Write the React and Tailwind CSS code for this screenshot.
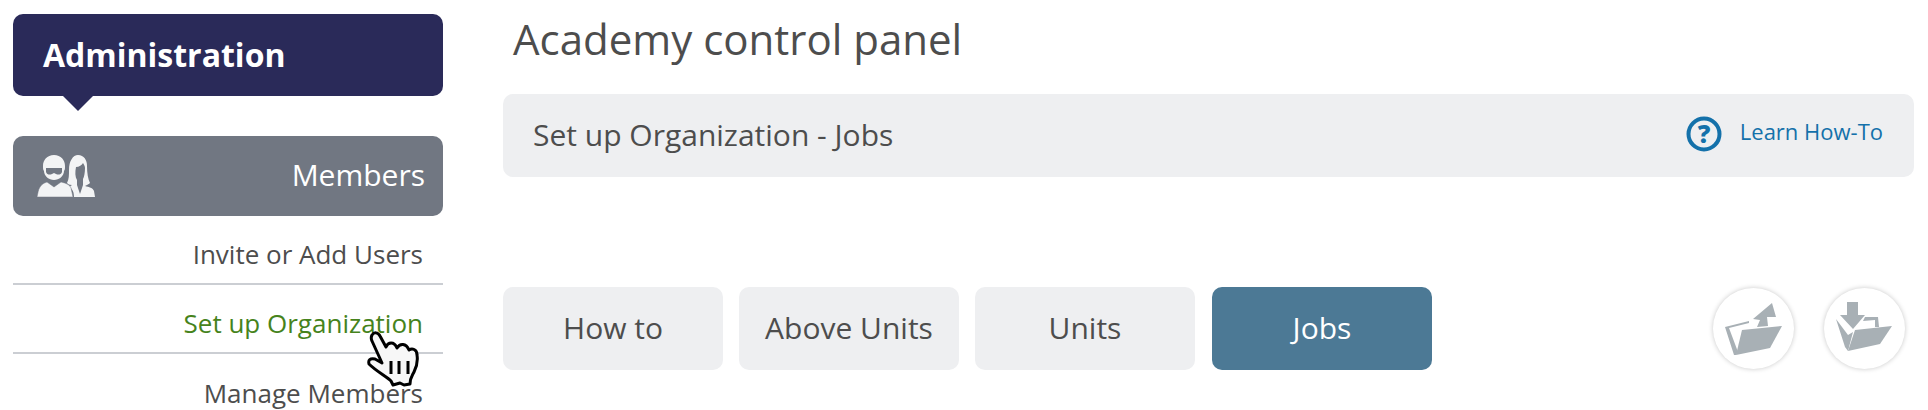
import React from "react";

function MembersIcon() {
  return (
    <svg width="62" height="46" viewBox="0 0 62 46" fill="#fff" opacity="0.92">
      <path d="M42 2c6 0 9 5 9 11 0 7 1 13 3 17-1 1-3 2-5 3 4 1 8 2 9 5l1 6H38c0-4-1-8-5-10 1-1 2-1 3-2-3 0-4-1-5-2 2-4 2-8 2-13 0-9 4-15 9-15z" />
      <path d="M40 14c3 0 6-2 7-4 1 2 2 3 2 5 0 5-1 9-2 11v6l-3 9-3-9v-5c-2-3-2-8-1-13z" fill="#717782" />
      <path d="M11 29l7 5 7-5c5 1 9 3 10 6l2 9H1c1-4 1-7 3-10 2-3 4-4 7-5z" stroke="#717782" strokeWidth="0.5" />
      <path d="M18 2c7 0 11 5 11 11 0 2 0 4-1 5 0 5-5 9-10 9S8 23 8 18c-1-1-1-3-1-5C7 7 11 2 18 2z" />
      <path d="M10 15h16l0 4c-1 3-4 3-6 2l-2-1-2 1c-2 1-5 1-6-2z" fill="#717782" />
    </svg>
  );
}

function HandCursor() {
  return (
    <svg className="absolute left-[367px] top-[331px]" width="52" height="56" viewBox="0 0 52 56">
      <path
        d="M5 4C7 1 11 1 13 5L19 16C21 11 27 10 30 17C33 12 39 12 42 19C45 17 50 18 50 24C51 30 49 37 47 41C45 45 43 47 43 53L37 54L33 52L26 54L24 50C20 46 9 40 2 33C1 29 3 27 8 28L15 32L5 10C4 8 4 6 5 4Z"
        fill="#f7f7f7"
        stroke="#000"
        strokeWidth="3"
        strokeLinejoin="round"
      />
      <path d="M24 30v13M32 30v13M41 30v13" stroke="#000" strokeWidth="3" fill="none" />
    </svg>
  );
}

function UploadFolder() {
  return (
    <svg className="blur-[0.5px]" width="58" height="54" viewBox="0 0 58 54" fill="#a8b0b5">
      <path d="M47 1L28 17l7 1-3 7 11-1-1-9 9 0z" />
      <path d="M0 25l24-6v2L4 26l9 24-2 3-2 0z" />
      <path d="M17 28l40-4-12 22-34 7z" />
    </svg>
  );
}

function DownloadFolder() {
  return (
    <svg className="blur-[0.5px]" width="58" height="54" viewBox="0 0 58 54" fill="#a8b0b5">
      <path d="M11 0h11v13h7L17 27 4 13h7z" />
      <path d="M0 17l12 16 5-3-5 19-3-4z" />
      <path d="M29 15h13l1 10h-4l0-7-12 1z" />
      <path d="M19 28l37-4-12 18-32 7z" />
    </svg>
  );
}

function Tab({ children, active, className }) {
  return (
    <button
      className={
        (active
          ? "flex h-[83px] w-[220px] items-center justify-center rounded-[10px] bg-[#4c7995] pb-[2px] text-[30px] text-white "
          : "flex h-[83px] w-[220px] items-center justify-center rounded-[10px] bg-[#eeeff1] pb-[2px] text-[30px] text-[#4d4d4d] ") +
        (className || "")
      }
    >
      {children}
    </button>
  );
}

export default function App() {
  return (
    <div className="relative flex h-[410px] w-[1928px] overflow-hidden bg-white font-['Open_Sans',sans-serif]">
      <aside className="ml-[13px] mt-[14px] flex w-[430px] shrink-0 flex-col">
        <div className="relative flex h-[82px] shrink-0 items-center rounded-[10px] bg-[#2a2a59] pl-[30px] text-[32px] font-bold text-white">
          Administration
          <span className="absolute left-[50px] top-[82px] h-0 w-0 border-x-[15px] border-t-[15px] border-x-transparent border-t-[#2a2a59]" />
        </div>
        <div className="mt-[40px] flex h-[80px] shrink-0 items-center justify-between rounded-[10px] bg-[#717782] pl-[23px] pr-[18px] text-[30px] text-white">
          <MembersIcon />
          <span className="pb-[4px]">Members</span>
        </div>
        <div className="flex h-[69px] shrink-0 items-center justify-end border-b-2 border-[#cbced3] pr-[20px] pt-[9px] text-[26px] text-[#4d4d4d]">
          Invite or Add Users
        </div>
        <div className="flex h-[69px] shrink-0 items-center justify-end border-b-2 border-[#cbced3] pr-[20px] pt-[9px] text-[26px] text-[#46831c]">
          Set up Organization
        </div>
        <div className="flex h-[69px] shrink-0 items-center justify-end pr-[20px] pt-[9px] text-[26px] text-[#4d4d4d]">
          Manage Members
        </div>
      </aside>

      <main className="ml-[60px] flex w-[1411px] shrink-0 flex-col">
        <h1 className="ml-[10px] mt-[10px] h-[70px] text-[42px] leading-[58px] text-[#4d4d4d]">Academy control panel</h1>
        <div className="mt-[14px] flex h-[83px] shrink-0 items-center justify-between rounded-[10px] bg-[#eeeff1] pl-[30px] pr-[31px]">
          <span className="pb-[2px] text-[30px] text-[#4d4d4d]">Set up Organization - Jobs</span>
          <a className="flex items-center gap-[18px] pb-[3px] text-[22px] text-[#1471aa]">
            <svg width="36" height="36" viewBox="0 0 36 36">
              <circle cx="18" cy="18" r="15.5" fill="none" stroke="#1471aa" strokeWidth="4" />
              <text x="18" y="27" textAnchor="middle" fontSize="25" fontWeight="800" fontFamily="Open Sans" fill="#1471aa">?</text>
            </svg>
            <span className="pb-[5px]">Learn How-To</span>
          </a>
        </div>
        <div className="mt-[110px] flex items-center">
          <div className="flex gap-[16px]">
            <Tab>How to</Tab>
            <Tab>Above Units</Tab>
            <Tab>Units</Tab>
            <Tab active className="ml-[1px]">Jobs</Tab>
          </div>
          <div className="ml-auto mr-[9px] flex gap-[30px]">
            <div className="flex h-[81px] w-[81px] items-center justify-center rounded-full bg-white shadow-[0_0_5px_rgba(0,0,0,0.22)]">
              <UploadFolder />
            </div>
            <div className="flex h-[81px] w-[81px] items-center justify-center rounded-full bg-white shadow-[0_0_5px_rgba(0,0,0,0.22)]">
              <DownloadFolder />
            </div>
          </div>
        </div>
      </main>
      <HandCursor />
    </div>
  );
}
